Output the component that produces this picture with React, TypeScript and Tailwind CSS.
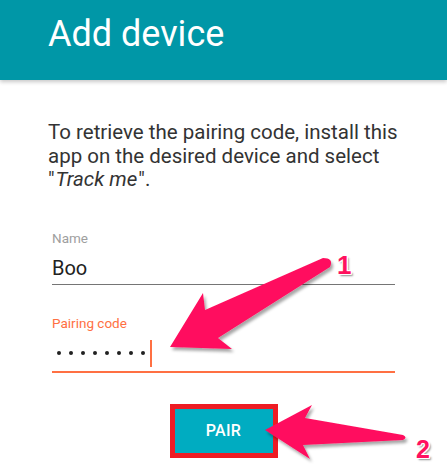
const dots = Array.from({ length: 8 });

function Arrows() {
  return (
    <svg
      className="absolute inset-0 pointer-events-none"
      width={447}
      height={474}
      viewBox="0 0 447 474"
    >
      <defs>
        <filter id="arrowShadow" x="-10%" y="-10%" width="130%" height="130%">
          <feDropShadow dx="2" dy="3" stdDeviation="1.5" floodColor="#000" floodOpacity="0.35" />
        </filter>
      </defs>
      <path
        d="M205 310 L323 258 Q334 258 330 267 L218 338 L232 349 L170 347 L203 293 Z"
        fill="#ff115e"
        filter="url(#arrowShadow)"
      />
      <path
        d="M265 430 L312 405 L305 418 L403 435 Q408 437.5 403 440 L303 445 L310 459 Z"
        fill="#ff115e"
        filter="url(#arrowShadow)"
      />
    </svg>
  );
}

export default function App() {
  return (
    <div className="relative w-[447px] h-[474px] overflow-hidden bg-white font-['Roboto','Liberation_Sans',sans-serif]">
      {/* app bar */}
      <header className="relative z-10 h-[80px] bg-[#0097a7] pl-[48px] pt-[16px] shadow-[0_2px_4px_rgba(0,0,0,0.22)]">
        <h1 className="text-white text-[36px] leading-[36px] font-normal">Add device</h1>
      </header>

      <main className="flex flex-col">
        <p className="mt-[41px] ml-[48px] w-[365px] text-[20.5px] leading-[23.5px] text-[#333333]">
          To retrieve the pairing code, install this app on the desired device and select{" "}
          <span className="whitespace-nowrap">
            "<span className="inline-block italic px-[1px]">Track me</span>".
          </span>
        </p>

        <div className="mx-[52px] flex flex-col">
          {/* name field */}
          <label className="mt-[39px] text-[13.5px] leading-[15px] text-[#9e9e9e]">Name</label>
          <div className="mt-[10px] pb-[4px] border-b border-[#757575] text-[20px] leading-[24px] text-[#212121]">
            Boo
          </div>

          {/* pairing code field */}
          <label className="mt-[31px] text-[13.5px] leading-[15px] text-[#ff7043]">Pairing code</label>
          <div className="mt-[9px] pb-[4px] border-b-2 border-[#ff7043]">
            <div className="h-[27px] flex items-center pl-[5px]">
              <div className="flex items-center gap-[8px]">
                {dots.map((_, i) => (
                  <span key={i} className="w-[4px] h-[4px] rounded-full bg-[#212121]" />
                ))}
              </div>
              <span className="ml-[5px] w-[2px] h-[27px] bg-[#ff7043]" />
            </div>
          </div>
        </div>

        <div className="mt-[31px] flex justify-center">
          <div className="border-[5px] border-[#ed1c24]">
            <button className="w-[98px] h-[44px] bg-[#00acc1] text-white text-[16px] font-medium tracking-[0.3px]">
              PAIR
            </button>
          </div>
        </div>
      </main>

      <Arrows />

      <span className="absolute left-[337px] top-[252px] text-[26px] leading-none font-bold text-[#ff115e] font-['Liberation_Sans',sans-serif] [text-shadow:1px_0_#fff,-1px_0_#fff,0_1px_#fff,0_-1px_#fff,1px_1px_#fff,-1px_-1px_#fff,1px_-1px_#fff,-1px_1px_#fff,2px_2px_2px_rgba(0,0,0,0.45)]">
        1
      </span>
      <span className="absolute left-[416px] top-[437px] text-[25px] leading-none font-bold text-[#ff115e] font-['Liberation_Sans',sans-serif] [text-shadow:1px_0_#fff,-1px_0_#fff,0_1px_#fff,0_-1px_#fff,1px_1px_#fff,-1px_-1px_#fff,1px_-1px_#fff,-1px_1px_#fff,2px_2px_2px_rgba(0,0,0,0.45)]">
        2
      </span>
    </div>
  );
}
